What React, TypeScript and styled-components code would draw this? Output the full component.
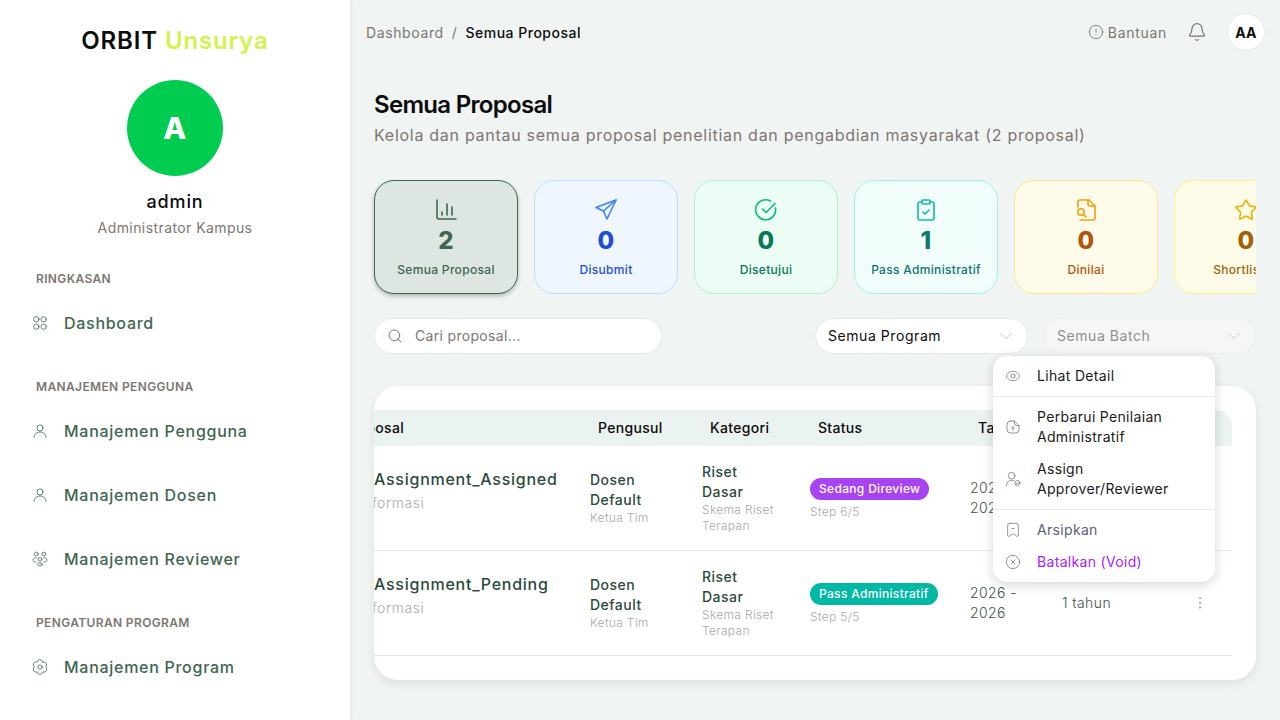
import React from "react";
import styled, { createGlobalStyle } from "styled-components";
import {
  Bell,
  ChevronDown,
  CircleAlert,
  ClipboardCheck,
  Eye,
  EllipsisVertical,
  CircleX,
  Search,
  Star,
} from "lucide-react";

const GlobalStyle = createGlobalStyle`
  * { box-sizing: border-box; }
  html, body { margin: 0; height: 100%; overflow: hidden; }
  body {
    font-family: "Inter", "Noto Sans", sans-serif;
    letter-spacing: 0.02em;
    background: #f0f4f3;
    color: #0c0c0c;
  }
`;

const Shell = styled.div`
  display: flex;
  width: 1280px;
  height: 720px;
  overflow: hidden;
`;

const Sidebar = styled.aside`
  flex: 0 0 350px;
  height: 720px;
  background: #fff;
  box-shadow: 0 0 6px rgba(0, 0, 0, 0.08);
  padding: 25px 0 0 32px;
  display: flex;
  flex-direction: column;
  overflow: hidden;
`;

const Logo = styled.div`
  margin-left: -32px;
  text-align: center;
  font-size: 24px;
  line-height: 32px;
  font-weight: 600;
  letter-spacing: 0.036em;
  span { color: #d2f34c; }
`;

const Profile = styled.div`
  margin-left: -32px;
  margin-top: 23px;
  display: flex;
  flex-direction: column;
  align-items: center;
`;

const Avatar = styled.div`
  width: 96px;
  height: 96px;
  border-radius: 50%;
  background: #00cc4f;
  color: #fff;
  font-size: 30px;
  font-weight: 800;
  display: flex;
  align-items: center;
  justify-content: center;
`;

const ProfileName = styled.div`
  margin-top: 12px;
  font-size: 18px;
  line-height: 28px;
  font-weight: 500;
  letter-spacing: 0.05em;
`;

const ProfileRole = styled.div`
  font-size: 14px;
  line-height: 24px;
  color: #7d7671;
  letter-spacing: 0.03em;
`;

const NavHeading = styled.div<{ $top: number }>`
  margin-top: ${(p) => p.$top}px;
  margin-bottom: 3px;
  padding-left: 4px;
  font-size: 12px;
  line-height: 18px;
  font-weight: 600;
  letter-spacing: 0.03em;
  color: #7d7671;
`;

const NavItem = styled.div`
  height: 64px;
  display: flex;
  align-items: center;
  gap: 16px;
  font-size: 16px;
  font-weight: 500;
  color: #3e6650;
  letter-spacing: 0.045em;
  svg { flex: none; }
`;

const Main = styled.main`
  flex: 1;
  min-width: 0;
  position: relative;
  display: flex;
  flex-direction: column;
`;

const Topbar = styled.header`
  height: 64px;
  padding: 0 15px 0 16px;
  display: flex;
  align-items: center;
  justify-content: space-between;
`;

const Crumbs = styled.nav`
  display: flex;
  align-items: center;
  gap: 8px;
  font-size: 14px;
  color: #7d7671;
  letter-spacing: 0.044em;
  b { font-weight: 500; color: #0c0c0c; letter-spacing: 0.036em; }
`;

const TopActions = styled.div`
  display: flex;
  align-items: center;
`;

const HelpLink = styled.div`
  display: flex;
  align-items: center;
  gap: 4px;
  font-size: 14px;
  color: #7d7671;
  letter-spacing: 0.05em;
  margin-right: 20px;
`;

const BellWrap = styled.div`
  display: flex;
  margin-right: 20px;
  color: #7d7671;
`;

const UserChip = styled.div`
  width: 38px;
  height: 38px;
  border-radius: 50%;
  background: #fff;
  border: 1px solid #e8e8e8;
  display: flex;
  align-items: center;
  justify-content: center;
  font-size: 14px;
  font-weight: 700;
`;

const Content = styled.div`
  flex: 1;
  min-height: 0;
  padding: 24px 24px 0;
  display: flex;
  flex-direction: column;
`;

const PageTitle = styled.h1`
  margin: 1px 0 0;
  font-size: 24px;
  line-height: 31px;
  font-weight: 600;
  letter-spacing: -0.029em;
`;

const PageSub = styled.p`
  margin: 0;
  font-size: 16px;
  line-height: 30px;
  color: #7d7671;
  letter-spacing: 0.045em;
`;

const StatStrip = styled.div`
  margin-top: 29px;
  display: flex;
  gap: 16px;
  overflow: hidden;
  padding: 1px 0 6px;
  margin-left: -4px;
  padding-left: 4px;
`;

const StatCard = styled.div<{ $bg: string; $line: string; $active?: boolean }>`
  flex: 0 0 144px;
  height: 114px;
  border-radius: 20px;
  background: ${(p) => p.$bg};
  border: 1px solid ${(p) => p.$line};
  box-shadow: ${(p) => (p.$active ? "0 2px 4px rgba(0,0,0,0.25)" : "none")};
  display: flex;
  flex-direction: column;
  align-items: center;
  padding-top: 17px;
`;

const StatGlyph = styled.span<{ $color: string }>`
  display: flex;
  color: ${(p) => p.$color};
`;

const StatValue = styled.div<{ $color: string }>`
  margin-top: 3px;
  font-size: 24px;
  line-height: 32px;
  font-weight: 800;
  color: ${(p) => p.$color};
`;

const StatLabel = styled.div<{ $color: string }>`
  margin-top: 1px;
  font-size: 12px;
  line-height: 24px;
  font-weight: 500;
  white-space: nowrap;
  color: ${(p) => p.$color};
`;

const FilterRow = styled.div`
  margin-top: 18px;
  display: flex;
  align-items: center;
  justify-content: space-between;
`;

const SearchBox = styled.div`
  width: 288px;
  height: 36px;
  border-radius: 18px;
  background: #fff;
  border: 1px solid #e8e8e8;
  display: flex;
  align-items: center;
  gap: 12px;
  padding: 0 12px 2px;
  font-size: 14px;
  color: #7d7671;
  svg { flex: none; margin-top: 2px; }
`;

const Selects = styled.div`
  display: flex;
  gap: 16px;
`;

const Select = styled.div<{ $disabled?: boolean }>`
  width: ${(p) => (p.$disabled ? 212 : 213)}px;
  height: 36px;
  border-radius: 18px;
  background: ${(p) => (p.$disabled ? "#f5f7f6" : "#fff")};
  border: 1px solid ${(p) => (p.$disabled ? "#ececec" : "#e8e8e8")};
  display: flex;
  align-items: center;
  justify-content: space-between;
  padding: 0 10px 2px 12px;
  font-size: 14px;
  letter-spacing: 0.04em;
  color: ${(p) => (p.$disabled ? "#8f8f8f" : "#0c0c0c")};
  svg { color: #c4c4c4; margin-top: 2px; }
`;

const TableCard = styled.section`
  margin-top: 32px;
  height: 294px;
  border-radius: 24px;
  background: #fff;
  box-shadow: 0 4px 10px rgba(0, 0, 0, 0.08);
  padding: 24px 24px 24px 0;
  overflow: hidden;
`;

const TableClip = styled.div`
  overflow: hidden;
  border-top-right-radius: 16px;
`;

const COLUMNS = "204px 112px 108px 160px 92px 110px 72px";

const HeaderRow = styled.div`
  display: grid;
  grid-template-columns: ${COLUMNS};
  height: 36px;
  align-items: center;
  background: #ebf3f0;
  font-size: 14px;
  font-weight: 500;
  padding-bottom: 1px;
`;

const HeaderCell = styled.div`
  padding-left: 20px;
  white-space: nowrap;
`;

const ClippedHead = styled.div`
  overflow: hidden;
  white-space: nowrap;
  display: flex;
  justify-content: flex-end;
  padding-right: 174px;
`;

const Row = styled.div`
  display: grid;
  grid-template-columns: ${COLUMNS};
  height: 105px;
  align-items: center;
  border-bottom: 1px solid #e6e6e6;
`;

const Cell = styled.div`
  padding: 0 12px;
  min-width: 0;
`;

const ProposalCell = styled.div`
  overflow: hidden;
  white-space: nowrap;
  padding-bottom: 15px;
`;

const ProposalTitle = styled.div`
  font-size: 16px;
  line-height: 24px;
  font-weight: 500;
  letter-spacing: 0.046em;
  color: #2c4a3b;
`;

const ProposalMeta = styled.div`
  margin-top: 1px;
  margin-left: -2px;
  font-size: 14px;
  line-height: 22px;
  letter-spacing: 0.04em;
  color: #a8a8a8;
  font-weight: 300;
`;

const CellStrong = styled.div`
  font-size: 14px;
  line-height: 20px;
  font-weight: 500;
  letter-spacing: 0.035em;
  color: #2c4a3b;
`;

const CellMuted = styled.div`
  font-size: 12px;
  line-height: 16px;
  color: #a8a8a8;
  font-weight: 300;
`;

const Badge = styled.span<{ $bg: string }>`
  display: inline-block;
  padding: 0 9px;
  height: 22px;
  line-height: 22px;
  border-radius: 11px;
  font-size: 12px;
  font-weight: 500;
  color: #fff;
  white-space: nowrap;
  background: ${(p) => p.$bg};
`;

const StepText = styled(CellMuted)`
  margin-top: 4px;
`;

const YearText = styled.div`
  font-size: 14px;
  line-height: 20px;
  color: #3e544a;
  font-weight: 300;
  letter-spacing: 0.03em;
`;

const ActionCell = styled.div`
  display: flex;
  justify-content: center;
  padding-left: 8px;
  color: #9a9a9a;
`;

const Menu = styled.div`
  position: absolute;
  left: 643px;
  top: 356px;
  width: 222px;
  border-radius: 14px;
  background: #fff;
  box-shadow: 0 3px 12px rgba(0, 0, 0, 0.16);
  padding: 4px 0;
  font-size: 14px;
`;

const MenuItem = styled.div<{ $color?: string }>`
  display: flex;
  align-items: center;
  gap: 16px;
  padding: 6px 12px;
  line-height: 20px;
  color: ${(p) => p.$color ?? "#1a1a1a"};
  svg { flex: none; color: #7d7671; }
`;

const MenuRule = styled.div`
  height: 1px;
  background: #e6e6e6;
  margin: 4px 0;
`;

const Icon = ({ children, size = 16, width = 1.2 }: { children: React.ReactNode; size?: number; width?: number }) => (
  <svg width={size} height={size} viewBox="0 0 24 24" fill="none" stroke="currentColor" strokeWidth={width} strokeLinecap="round" strokeLinejoin="round">
    {children}
  </svg>
);

const GridIcon = () => (
  <Icon><circle cx="6.5" cy="6.5" r="4" /><circle cx="17.5" cy="6.5" r="4" /><circle cx="6.5" cy="17.5" r="4" /><circle cx="17.5" cy="17.5" r="4" /></Icon>
);
const UserIcon = () => (
  <Icon><circle cx="12" cy="7.5" r="4.5" /><path d="M3 22c0-5 4-8.500 9-8.500s9 3.500 9 8.500" /></Icon>
);
const TeamIcon = () => (
  <Icon>
    <circle cx="6.500" cy="4.500" r="2.800" /><circle cx="17.500" cy="4.500" r="2.800" /><circle cx="12" cy="12.500" r="2.800" /><ellipse cx="12" cy="20" rx="3.500" ry="2.200" />
    <path d="M1.500 13c.5-2 2.500-3 5-2.800M22.500 13c-.5-2-2.500-3-5-2.800M1.500 14.500c1 1.800 3 2.300 5 2M22.500 14.500c-1 1.800-3 2.300-5 2" />
  </Icon>
);
const FlowerIcon = () => (
  <Icon>
    <path d="M16.300 4.550A4.400 4.400 0 0 1 20.600 12 4.400 4.400 0 0 1 16.300 19.450 4.400 4.400 0 0 1 7.700 19.450 4.400 4.400 0 0 1 3.400 12 4.400 4.400 0 0 1 7.700 4.550 4.400 4.400 0 0 1 16.300 4.550z" />
    <circle cx="12" cy="12" r="3.200" />
  </Icon>
);
const ChartIcon = () => (
  <Icon size={24} width={1.6}><path d="M3 2v17a2 2 0 0 0 2 2h17" /><path d="M8 17v-3M13 17V6M18 17V9" /></Icon>
);
const PlaneIcon = () => (
  <Icon size={24} width={1.6}><path d="M22 2 2 9.500l7.500 3.500L13 21z" /><path d="M22 2 9.500 13" /></Icon>
);
const CheckRingIcon = () => (
  <Icon size={24} width={1.6}><path d="M21.500 10a10 10 0 1 1-5-7" /><path d="m8.500 11 3.500 3.500 9-9" /></Icon>
);
const FileLookIcon = () => (
  <Icon size={24} width={1.6}>
    <path d="M4 9V4a2 2 0 0 1 2-2h9l6 6v12a2 2 0 0 1-2 2H6" /><path d="M14 2v4a2 2 0 0 0 2 2h5" /><circle cx="7" cy="14" r="3.200" /><path d="m9.500 16.500 2.500 2.500" />
  </Icon>
);
const UploadNoteIcon = () => (
  <Icon>
    <path d="M8 3h6l7 7v6a5 5 0 0 1-5 5H8a5 5 0 0 1-5-5V8a5 5 0 0 1 5-5z" /><path d="M14 3v3a4 4 0 0 0 4 4h3" /><path d="M12 17v-5M9.800 14l2.200-2.200 2.200 2.200" />
  </Icon>
);
const UserCheckIcon = () => (
  <Icon>
    <circle cx="10" cy="7" r="5" /><path d="M2 22c0-5 3.500-8 8-8 1 0 2 .1 3 .5" /><circle cx="18.500" cy="18" r="3.800" /><path d="m16.800 18.500 1.300 1 2-2" />
  </Icon>
);
const ArchiveIcon = () => (
  <Icon><path d="M7 2h10a3 3 0 0 1 3 3v15c0 1.500-1.500 2-2.500 1.300L15 19.500a4 4 0 0 0-6 0l-2.500 1.800C5.500 22 4 21.500 4 20V5a3 3 0 0 1 3-3z" /><path d="M10 10h4" /></Icon>
);

const stats = [
  { label: "Semua Proposal", value: "2", bg: "#dde6e1", line: "#3e6650", icon: "#3e6650", text: "#3e6650", glyph: <ChartIcon />, active: true },
  { label: "Disubmit", value: "0", bg: "#eff6ff", line: "#bfdbfe", icon: "#3b82f6", text: "#1d4ed8", glyph: <PlaneIcon /> },
  { label: "Disetujui", value: "0", bg: "#ecfdf5", line: "#a7f3d0", icon: "#10b981", text: "#047857", glyph: <CheckRingIcon /> },
  { label: "Pass Administratif", value: "1", bg: "#f0fdfa", line: "#99f6e4", icon: "#14b8a6", text: "#0f766e", glyph: <ClipboardCheck size={24} strokeWidth={1.6} /> },
  { label: "Dinilai", value: "0", bg: "#fffbeb", line: "#fde68a", icon: "#f59e0b", text: "#b45309", glyph: <FileLookIcon /> },
  { label: "Shortlisted", value: "0", bg: "#fefce8", line: "#fef08a", icon: "#eab308", text: "#a16207", glyph: <Star size={24} strokeWidth={1.6} /> },
];

const rows = [
  { title: "Assignment_Assigned", badge: "Sedang Direview", bg: "#a843f2", step: "Step 6/5" },
  { title: "Assignment_Pending", badge: "Pass Administratif", bg: "#00b8a3", step: "Step 5/5" },
];

const App: React.FC = () => (
  <Shell>
    <GlobalStyle />
    <Sidebar>
      <Logo>ORBIT <span>Unsurya</span></Logo>
      <Profile>
        <Avatar>A</Avatar>
        <ProfileName>admin</ProfileName>
        <ProfileRole>Administrator Kampus</ProfileRole>
      </Profile>
      <NavHeading $top={30}>RINGKASAN</NavHeading>
      <NavItem><GridIcon />Dashboard</NavItem>
      <NavHeading $top={23}>MANAJEMEN PENGGUNA</NavHeading>
      <NavItem><UserIcon />Manajemen Pengguna</NavItem>
      <NavItem><UserIcon />Manajemen Dosen</NavItem>
      <NavItem><TeamIcon />Manajemen Reviewer</NavItem>
      <NavHeading $top={23}>PENGATURAN PROGRAM</NavHeading>
      <NavItem><FlowerIcon />Manajemen Program</NavItem>
    </Sidebar>
    <Main>
      <Topbar>
        <Crumbs>Dashboard <span>/</span> <b>Semua Proposal</b></Crumbs>
        <TopActions>
          <HelpLink><CircleAlert size={16} strokeWidth={1.4} />Bantuan</HelpLink>
          <BellWrap><Bell size={20} strokeWidth={1.4} /></BellWrap>
          <UserChip>AA</UserChip>
        </TopActions>
      </Topbar>
      <Content>
        <PageTitle>Semua Proposal</PageTitle>
        <PageSub>Kelola dan pantau semua proposal penelitian dan pengabdian masyarakat (2 proposal)</PageSub>
        <StatStrip>
          {stats.map((s) => (
            <StatCard key={s.label} $bg={s.bg} $line={s.line} $active={s.active}>
              <StatGlyph $color={s.icon}>{s.glyph}</StatGlyph>
              <StatValue $color={s.text}>{s.value}</StatValue>
              <StatLabel $color={s.text}>{s.label}</StatLabel>
            </StatCard>
          ))}
        </StatStrip>
        <FilterRow>
          <SearchBox><Search size={16} strokeWidth={1.5} />Cari proposal...</SearchBox>
          <Selects>
            <Select>Semua Program<ChevronDown size={22} strokeWidth={1} /></Select>
            <Select $disabled>Semua Batch<ChevronDown size={22} strokeWidth={1} /></Select>
          </Selects>
        </FilterRow>
        <TableCard>
          <TableClip>
            <HeaderRow>
              <ClippedHead>Proposal</ClippedHead>
              <HeaderCell>Pengusul</HeaderCell>
              <HeaderCell>Kategori</HeaderCell>
              <HeaderCell>Status</HeaderCell>
              <HeaderCell>Tahun</HeaderCell>
              <HeaderCell>Durasi</HeaderCell>
              <HeaderCell />
            </HeaderRow>
            {rows.map((r) => (
              <Row key={r.title}>
                <ProposalCell>
                  <ProposalTitle>{r.title}</ProposalTitle>
                  <ProposalMeta>formasi</ProposalMeta>
                </ProposalCell>
                <Cell>
                  <CellStrong>Dosen Default</CellStrong>
                  <CellMuted>Ketua Tim</CellMuted>
                </Cell>
                <Cell>
                  <CellStrong>Riset<br />Dasar</CellStrong>
                  <CellMuted>Skema Riset Terapan</CellMuted>
                </Cell>
                <Cell>
                  <Badge $bg={r.bg}>{r.badge}</Badge>
                  <StepText>{r.step}</StepText>
                </Cell>
                <Cell><YearText>2026 - 2026</YearText></Cell>
                <Cell><YearText>1 tahun</YearText></Cell>
                <ActionCell><EllipsisVertical size={16} strokeWidth={1.4} /></ActionCell>
              </Row>
            ))}
          </TableClip>
        </TableCard>
      </Content>
      <Menu>
        <MenuItem><Eye size={16} strokeWidth={1.2} />Lihat Detail</MenuItem>
        <MenuRule />
        <MenuItem><UploadNoteIcon />Perbarui Penilaian Administratif</MenuItem>
        <MenuItem><UserCheckIcon />Assign Approver/Reviewer</MenuItem>
        <MenuRule />
        <MenuItem $color="#566178"><ArchiveIcon />Arsipkan</MenuItem>
        <MenuItem $color="#a81cff"><CircleX size={16} strokeWidth={1.2} />Batalkan (Void)</MenuItem>
      </Menu>
    </Main>
  </Shell>
);

export default App;
